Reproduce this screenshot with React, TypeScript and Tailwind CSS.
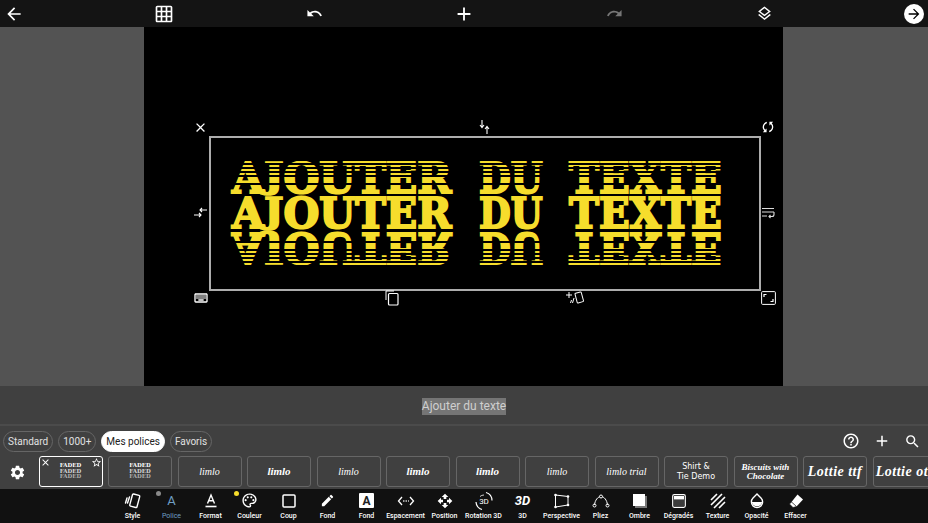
import React from 'react';
import {
  MdArrowBack,
  MdArrowForward,
  MdGridOn,
  MdUndo,
  MdRedo,
  MdAdd,
  MdOutlineLayers,
  MdClose,
  MdSync,
  MdSettings,
  MdHelpOutline,
  MdSearch,
  MdStarBorder,
  MdEdit,
  MdOpenWith,
  MdOutlinePalette,
  MdOutlineKeyboard,
} from 'react-icons/md';

const stripes =
  'bg-[linear-gradient(to_bottom,#000_0,#000_1px,transparent_1px,transparent_3px,#000_3px,#000_5px,transparent_5px,transparent_7px,#000_7px,#000_9px,transparent_9px,transparent_11px,#000_11px,#000_13px,transparent_13px,transparent_15px,#000_15px,#000_17px,transparent_17px,transparent_23px,#000_23px,#000_25px,transparent_25px,transparent_100%)]';

// the three words of the canvas title, widths taken from the picture
const TitleWords: React.FC = () => (
  <div className="flex h-[37px] items-center whitespace-nowrap font-['DejaVu_Serif',serif] text-[42px] font-bold leading-none text-[#f6dd2c] [-webkit-text-stroke:2px_#f6dd2c]">
    <span className="w-[247px] origin-left scale-x-[0.98]">
      A<span className="inline-block origin-[50%_5px] scale-y-[0.83]">J</span>OUTER
    </span>
    <span className="w-[90px] origin-left scale-x-[0.87]">DU</span>
    <span className="w-[154px] origin-left scale-x-[0.96]">TEXTE</span>
  </div>
);

const StripedCopy: React.FC<{ flipped?: boolean; className: string }> = ({ flipped, className }) => (
  <div className={`absolute left-[88px] h-[37px] w-[495px] ${flipped ? '-scale-y-100' : ''} ${className}`}>
    <TitleWords />
    <div className={`absolute inset-0 ${stripes}`} />
  </div>
);

const StyleIcon = () => (
  <svg width="18" height="18" viewBox="0 0 18 18" fill="none" stroke="#fff" strokeWidth="1.4">
    <rect x="7" y="2.5" width="7.5" height="12.5" rx="1" transform="rotate(15 10.7 8.7)" />
    <path d="M5.5 5 3.5 11M3 6 1.5 11" strokeLinecap="round" />
  </svg>
);

const PoliceIcon = () => <span className="font-['Roboto',sans-serif] text-[13px] leading-none text-[#6f9fc4]">A</span>;

const FormatIcon = () => (
  <svg width="16" height="16" viewBox="0 0 16 16" fill="none" stroke="#fff" strokeWidth="1.4">
    <path d="M4.5 10.5 8 2l3.5 8.5M5.8 7.8h4.4" />
    <path d="M2.5 13.5h11" strokeWidth="1.6" />
  </svg>
);

const CoupIcon = () => (
  <svg width="16" height="16" viewBox="0 0 16 16" fill="none" stroke="#fff" strokeWidth="1.5">
    <rect x="2" y="2" width="12" height="12" rx="1" />
  </svg>
);

const FondAIcon = () => (
  <div className="flex h-[15px] w-[15px] items-center justify-center rounded-[1px] bg-white font-['Roboto',sans-serif] text-[12px] font-bold leading-none text-[#222]">
    A
  </div>
);

const SpacingIcon = () => (
  <svg width="18" height="12" viewBox="0 0 18 12" fill="none" stroke="#fff" strokeWidth="1.3">
    <path d="M5 2 1.5 6 5 10M13 2l3.5 4L13 10" />
    <path d="M6.2 6h5.6" strokeDasharray="1.2 1.2" />
  </svg>
);

const Rotate3DIcon = () => (
  <svg width="20" height="20" viewBox="0 0 20 20" fill="none" stroke="#fff" strokeWidth="1.2">
    <path d="M12 1.5A8.5 8.5 0 0 1 18 9.5M8 18.5A8.5 8.5 0 0 1 2 11" />
    <path d="M6 5.5A6 6 0 0 1 10 4" strokeWidth="0.8" />
    <text x="10" y="12.8" textAnchor="middle" fill="#fff" stroke="none" fontSize="8" fontFamily="Roboto, sans-serif">
      3D
    </text>
  </svg>
);

const ThreeDIcon = () => (
  <span className="font-['Roboto',sans-serif] text-[13px] font-bold italic leading-none text-white">3D</span>
);

const PerspectiveIcon = () => (
  <svg width="18" height="16" viewBox="0 0 18 16" fill="none" stroke="#fff" strokeWidth="1">
    <path d="M2.5 2 15 3.5v8.5L2.5 14z" />
    <g fill="#fff" stroke="none">
      <circle cx="2.5" cy="2" r="1.3" />
      <circle cx="15" cy="3.5" r="1.3" />
      <circle cx="15" cy="12" r="1.3" />
      <circle cx="2.5" cy="14" r="1.3" />
    </g>
  </svg>
);

const PliezIcon = () => (
  <svg width="18" height="14" viewBox="0 0 18 14" fill="none" stroke="#fff" strokeWidth="1">
    <path d="M2.5 11C3 6 6 2.5 9 2.5S15 6 15.5 11" />
    <circle cx="2.5" cy="11.5" r="1.5" />
    <circle cx="9" cy="2.5" r="1.5" fill="#111" />
    <circle cx="15.5" cy="11.5" r="1.5" />
  </svg>
);

const OmbreIcon = () => (
  <svg width="16" height="16" viewBox="0 0 16 16">
    <rect x="3" y="3" width="12" height="12" fill="#777" />
    <rect x="1" y="1" width="12" height="12" fill="#fff" />
  </svg>
);

const GradientIcon = () => (
  <svg width="14" height="14" viewBox="0 0 14 14" fill="none">
    <rect x="0.7" y="0.7" width="12.6" height="12.6" rx="1.5" stroke="#fff" strokeWidth="1.2" />
    <rect x="2" y="2" width="10" height="3.5" fill="#fff" />
    <path d="M2.5 7h9M2.5 9h9M2.5 11h9" stroke="#bbb" strokeWidth="1.2" strokeDasharray="1 1" />
  </svg>
);

const TextureIcon = () => (
  <svg width="16" height="16" viewBox="0 0 16 16" stroke="#fff" strokeWidth="1.6">
    <path d="M1 7 7 1M1 12 12 1M4 15 15 4M9 15l6-6" />
  </svg>
);

const OpacityIcon = () => (
  <svg width="14" height="16" viewBox="0 0 14 16">
    <path d="M7 1 3 5a5.6 5.6 0 1 0 8 0z" fill="none" stroke="#fff" strokeWidth="1.4" />
    <path d="M1.8 9h10.4a5.3 5.3 0 0 1-10.4 0z" fill="#fff" />
  </svg>
);

const EraserIcon = () => (
  <svg width="16" height="16" viewBox="0 0 16 16">
    <path d="M9.5 1.5 15 6.5 8.5 13.5 3.5 9z" fill="#fff" />
    <path d="M3.5 9 1.5 11l3.5 3.5 3.5-1z" fill="#fff" stroke="#111" strokeWidth="0.6" />
  </svg>
);

const tools: { label: string; icon: React.ReactNode; active?: boolean; dot?: string }[] = [
  { label: 'Style', icon: <StyleIcon /> },
  { label: 'Police', icon: <PoliceIcon />, active: true, dot: 'bg-[#8a8a8a]' },
  { label: 'Format', icon: <FormatIcon /> },
  { label: 'Couleur', icon: <MdOutlinePalette className="text-[17px] text-white" />, dot: 'bg-[#f6dd2c]' },
  { label: 'Coup', icon: <CoupIcon /> },
  { label: 'Fond', icon: <MdEdit className="text-[15px] text-white" /> },
  { label: 'Fond', icon: <FondAIcon /> },
  { label: 'Espacement', icon: <SpacingIcon /> },
  { label: 'Position', icon: <MdOpenWith className="text-[16px] text-white" /> },
  { label: 'Rotation 3D', icon: <Rotate3DIcon /> },
  { label: '3D', icon: <ThreeDIcon /> },
  { label: 'Perspective', icon: <PerspectiveIcon /> },
  { label: 'Pliez', icon: <PliezIcon /> },
  { label: 'Ombre', icon: <OmbreIcon /> },
  { label: 'Dégradés', icon: <GradientIcon /> },
  { label: 'Texture', icon: <TextureIcon /> },
  { label: 'Opacité', icon: <OpacityIcon /> },
  { label: 'Effacer', icon: <EraserIcon /> },
];

const FadedThumb: React.FC = () => (
  <div className="flex flex-col items-center font-['DejaVu_Serif',serif] text-[5.5px] font-bold leading-[5.5px] text-white">
    <span>FADED</span>
    <span className="text-[#d8d8d8]">FADED</span>
    <span className="text-[#b0b0b0]">FADED</span>
  </div>
);

const scriptFont = "font-['Liberation_Serif',serif] italic text-white leading-none";

const thumbs: React.ReactNode[] = [
  <FadedThumb />,
  <FadedThumb />,
  <span className={`${scriptFont} text-[10px] text-[#bbb]`}>limlo</span>,
  <span className={`${scriptFont} text-[11px] font-bold`}>limlo</span>,
  <span className={`${scriptFont} text-[10px]`}>limlo</span>,
  <span className={`${scriptFont} text-[11px] font-bold`}>limlo</span>,
  <span className={`${scriptFont} text-[11px] font-bold`}>limlo</span>,
  <span className={`${scriptFont} text-[10px] text-[#777]`}>limlo</span>,
  <span className={`${scriptFont} text-[10px] text-[#bbb]`}>limlo trial</span>,
  <span className="text-center font-['DejaVu_Sans',sans-serif] text-[8px] leading-[10px] text-white">
    Shirt &amp;
    <br />
    Tie Demo
  </span>,
  <span className={`${scriptFont} text-center text-[9px] font-bold leading-[11px]`}>
    Biscuits with
    <br />
    Chocolate
  </span>,
  <span className={`${scriptFont} text-[14px] font-bold tracking-[0.5px]`}>Lottie ttf</span>,
  <span className={`${scriptFont} whitespace-nowrap text-[14px] font-bold tracking-[0.5px]`}>Lottie otf</span>,
];

const tabs = ['Standard', '1000+', 'Mes polices', 'Favoris'];

export default function App() {
  return (
    <div className="flex h-[523px] w-[928px] flex-col overflow-hidden bg-[#404040] font-['Roboto',sans-serif]">
      {/* Top bar */}
      <header className="flex h-[27px] shrink-0 items-center justify-between bg-[#141414] px-1 text-white">
        <div className="flex w-5 justify-center"><MdArrowBack className="h-5 w-5" /></div>
        <div className="flex w-5 justify-center"><MdGridOn className="h-5 w-5" /></div>
        <div className="flex w-5 justify-center"><MdUndo className="h-[17px] w-[17px]" /></div>
        <div className="flex w-5 justify-center"><MdAdd className="h-[22px] w-[22px] shrink-0" /></div>
        <div className="flex w-5 justify-center"><MdRedo className="h-[17px] w-[17px] text-[#777]" /></div>
        <div className="flex w-5 justify-center"><MdOutlineLayers className="h-[17px] w-[17px]" /></div>
        <div className="flex h-5 w-5 items-center justify-center rounded-full bg-white">
          <MdArrowForward className="h-4 w-4 text-black" />
        </div>
      </header>

      {/* Canvas */}
      <main className="flex h-[359px] shrink-0 bg-[#535353]">
        <div className="w-[144px] shrink-0" />
        <div className="relative w-[639px] shrink-0 overflow-hidden bg-black">
          <StripedCopy className="top-[133px]" />
          <StripedCopy flipped className="top-[202px]" />
          <div className="absolute left-[88px] top-[168px] w-[495px]">
            <TitleWords />
          </div>
          <div className="absolute left-[65px] top-[109px] h-[155px] w-[552px] border-2 border-[#adadad]" />

          {/* handles round the selection */}
          <MdClose className="absolute left-[49px] top-[93px] h-[15px] w-[15px] text-white" />
          <svg className="absolute left-[334px] top-[92px]" width="13" height="16" viewBox="0 0 13 16" fill="none" stroke="#fff" strokeWidth="1.1">
            <path d="M4 1v7M2 6l2 2.5L6 6M9 15V8M7 10l2-2.5 2 2.5" />
          </svg>
          <MdSync className="absolute left-[616px] top-[92px] h-4 w-4 rotate-45 text-white" />
          <svg className="absolute left-[49px] top-[179px]" width="15" height="13" viewBox="0 0 15 13" fill="none" stroke="#fff" strokeWidth="1.1">
            <path d="M1 9h7M6 7l2 2-2 2M14 4H7M9 2 7 4l2 2" />
          </svg>
          <svg className="absolute left-[617px] top-[180px]" width="14" height="12" viewBox="0 0 14 12" fill="none" stroke="#ddd" strokeWidth="1.1">
            <path d="M1 1.5h12M1 5h12M1 9h5M13 5v2.5A2 2 0 0 1 11 9.5H8M9.5 8 8 9.5 9.5 11" />
          </svg>
          <MdOutlineKeyboard className="absolute left-[49px] top-[263px] h-4 w-4 text-white" />
          <svg className="absolute left-[241px] top-[263px]" width="14" height="16" viewBox="0 0 14 16" fill="none" stroke="#fff" strokeWidth="1">
            <path d="M1 10V1h8" />
            <rect x="3.5" y="3.5" width="9.5" height="11.5" rx="1" strokeWidth="1.2" />
          </svg>
          <svg className="absolute left-[422px] top-[263px]" width="20" height="16" viewBox="0 0 20 16" fill="none" stroke="#fff" strokeWidth="1">
            <path d="M0 5h6M3 2v6" />
            <rect x="10" y="2.5" width="6.5" height="10" rx="0.8" transform="rotate(-15 13 7.5)" />
            <path d="M8 8 6.5 13M5.5 10 4.5 13" />
          </svg>
          <svg className="absolute left-[617px] top-[264px]" width="15" height="14" viewBox="0 0 15 14" fill="none" stroke="#fff">
            <rect x="0.6" y="0.6" width="13.8" height="12.8" rx="1" strokeWidth="1" />
            <path d="M3 6V3.5h2.5M12 8v2.5H9.5" strokeWidth="1.2" />
          </svg>
        </div>
        <div className="flex-1" />
      </main>

      {/* Text input */}
      <div className="flex h-[40px] shrink-0 items-center justify-center border-b-2 border-[#4b4b4b] bg-[#404040] pt-[2px]">
        <span className="bg-[#757575] text-[12px] leading-[17px] text-[#cfcfcf]">Ajouter du texte</span>
      </div>

      {/* Font tabs */}
      <div className="flex h-[30px] shrink-0 items-center justify-between pl-[3px] pr-[7px]">
        <div className="flex gap-[5px]">
          {tabs.map((tab) => (
            <div
              key={tab}
              className={`flex h-[21px] items-center rounded-full border px-[4px] text-[10px] ${
                tab === 'Mes polices' ? 'border-white bg-white text-[#222]' : 'border-[#666] text-[#e0e0e0]'
              }`}
            >
              {tab}
            </div>
          ))}
        </div>
        <div className="flex items-center gap-[13px] text-white">
          <MdHelpOutline className="h-[18px] w-[18px]" />
          <MdAdd className="h-[18px] w-[18px]" />
          <MdSearch className="h-[17px] w-[17px]" />
        </div>
      </div>

      {/* Font list */}
      <div className="flex h-[33px] shrink-0 items-start gap-[5.5px] overflow-hidden">
        <div className="flex h-[31px] w-[33px] shrink-0 items-center justify-end pt-[1px]">
          <MdSettings className="mr-[7px] h-[17px] w-[17px] text-white" />
        </div>
        {thumbs.map((thumb, i) => (
          <div
            key={i}
            className={`relative flex h-[31px] w-[64px] shrink-0 items-center justify-center overflow-hidden rounded-[3px] border ${
              i === 0 ? 'border-white' : 'border-[#666]'
            }`}
          >
            {thumb}
            {i === 0 && (
              <>
                <MdClose className="absolute left-0 top-0 h-[11px] w-[11px] text-white" />
                <MdStarBorder className="absolute right-0 top-0 h-[11px] w-[11px] text-white" />
              </>
            )}
          </div>
        ))}
      </div>

      {/* Tool bar */}
      <nav className="flex h-[34px] shrink-0 bg-[#111111] pl-[113px]">
        {tools.map((tool, i) => (
          <div key={i} className="relative flex w-[39px] shrink-0 flex-col items-center">
            {tool.dot && <span className={`absolute left-[4px] top-[2px] h-[5px] w-[5px] rounded-full ${tool.dot}`} />}
            <div className="flex h-[23px] items-center justify-center">{tool.icon}</div>
            <span
              className={`whitespace-nowrap text-[7px] font-medium leading-[9px] ${
                tool.active ? 'text-[7.5px] font-normal text-[#6f9fc4]' : 'text-white'
              }`}
            >
              {tool.label}
            </span>
          </div>
        ))}
      </nav>
    </div>
  );
}
